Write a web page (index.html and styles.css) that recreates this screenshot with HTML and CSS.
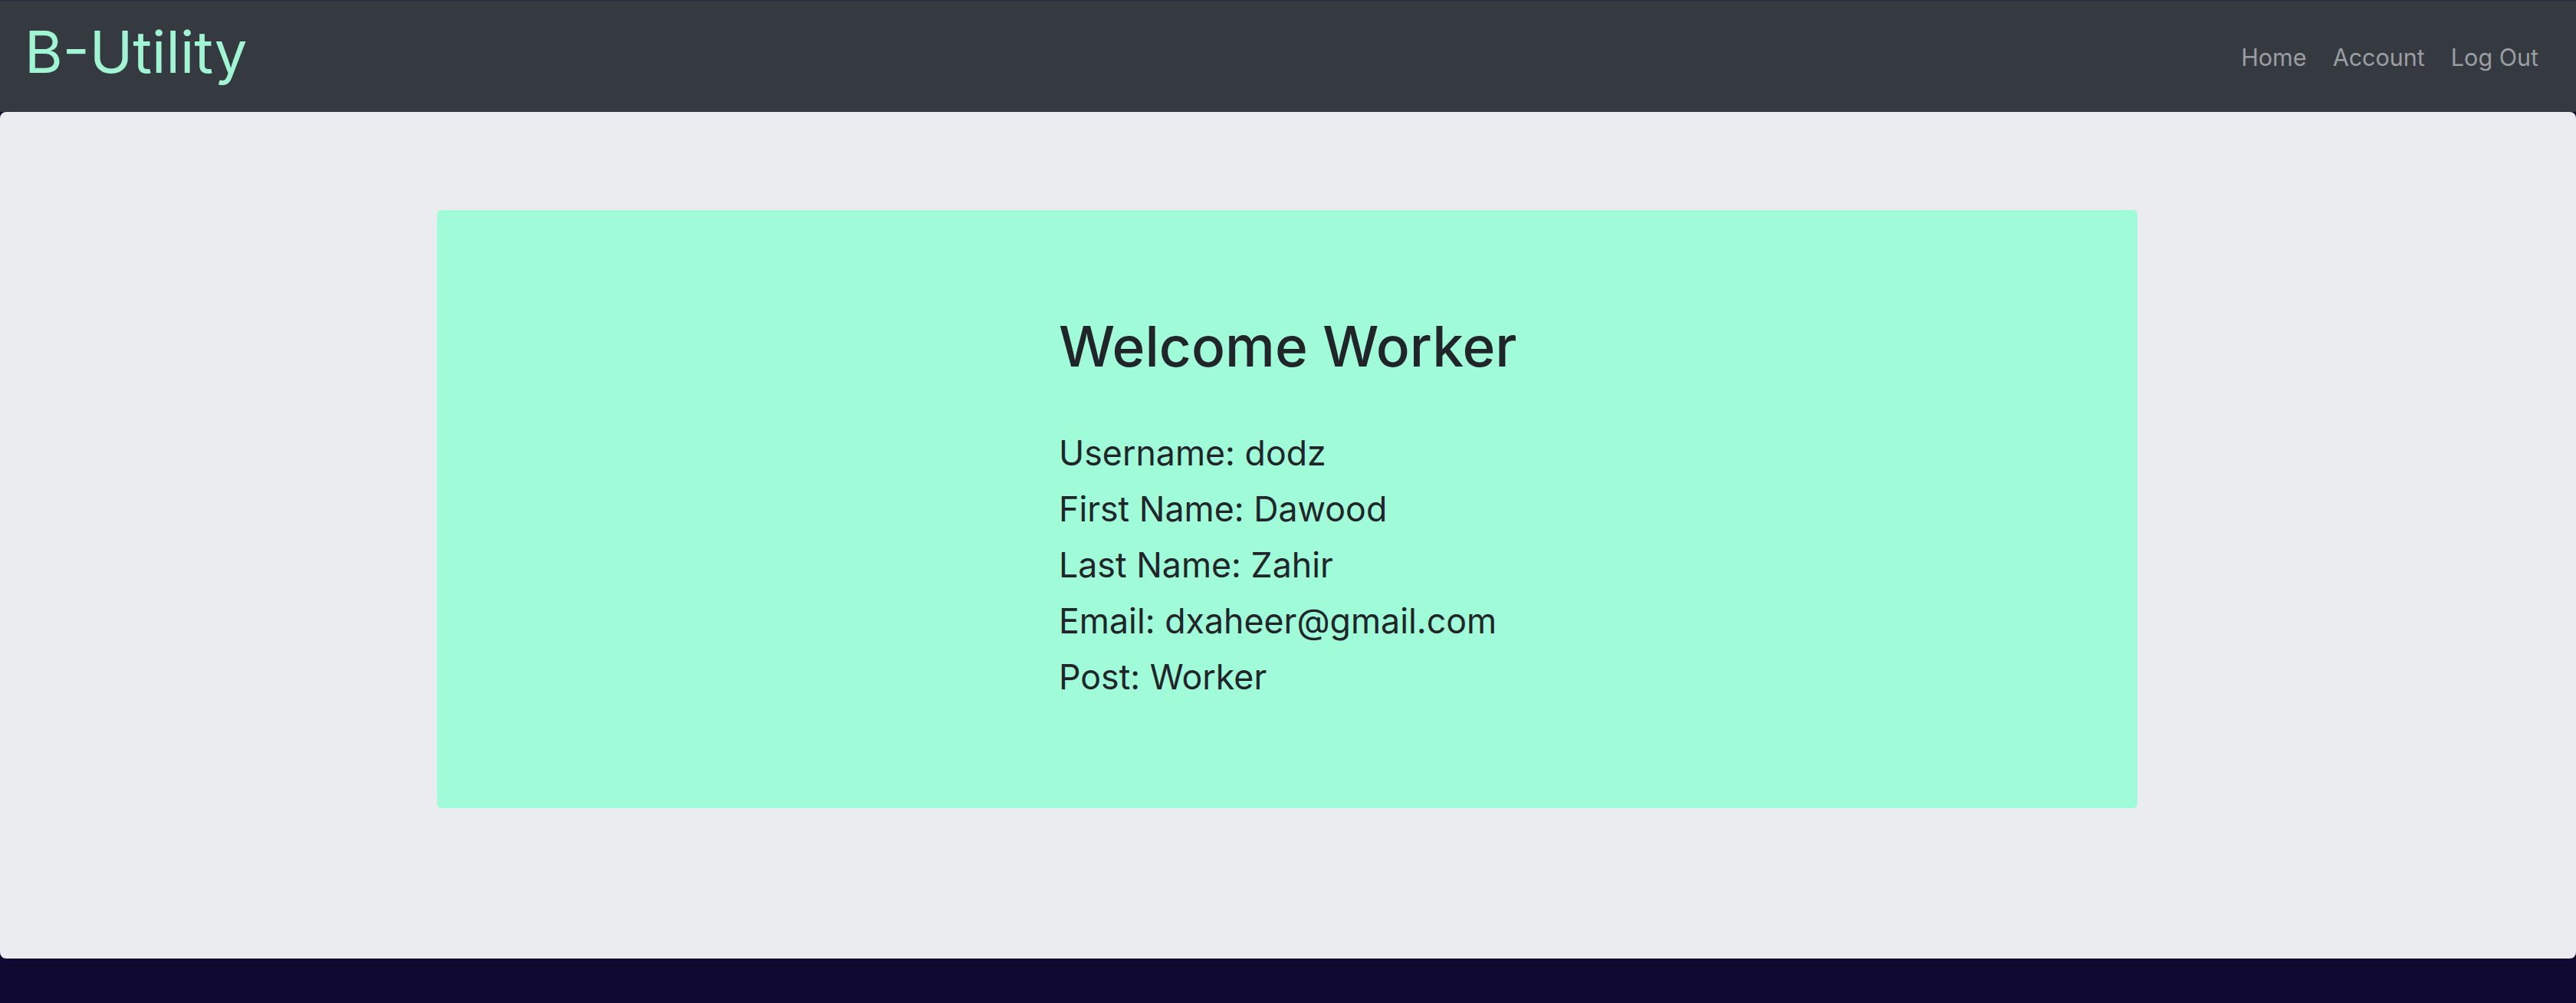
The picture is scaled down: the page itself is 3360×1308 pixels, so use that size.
FILE: index.html
```html
<!DOCTYPE html>
<html lang="en">
<head>
<meta charset="utf-8">
<title>B-Utility</title>
<link rel="stylesheet" href="styles.css">
</head>
<body>
<nav class="navbar">
  <a class="brand" href="#">B-Utility</a>
  <ul class="nav-links">
    <li><a href="#">Home</a></li>
    <li><a href="#">Account</a></li>
    <li><a href="#">Log Out</a></li>
  </ul>
</nav>
<main class="main">
  <section class="card">
    <div class="card-inner">
      <h1 class="title">Welcome Worker</h1>
      <p class="line">Username: dodz</p>
      <p class="line">First Name: Dawood</p>
      <p class="line">Last Name: Zahir</p>
      <p class="line">Email: dxaheer@gmail.com</p>
      <p class="line">Post: Worker</p>
    </div>
  </section>
</main>
</body>
</html>
```

FILE: styles.css
```css
html, body {
  margin: 0;
  padding: 0;
}
body {
  background: #0f0830;
  font-family: Inter, "Noto Sans", "Liberation Sans", sans-serif;
  color: #212529;
  min-height: 1308px;
}
.navbar {
  height: 146px;
  box-sizing: border-box;
  background: #343a40;
  border-top: 2px solid #2a2d3c;
  display: flex;
  align-items: center;
  justify-content: space-between;
  padding: 0 49px 0 32px;
}
.brand {
  color: #a0f5d3;
  font-size: 76px;
  line-height: 1;
  text-decoration: none;
  margin-top: -14px;
}
.nav-links {
  list-style: none;
  display: flex;
  gap: 34px;
  margin: 0;
  padding: 0;
}
.nav-links a {
  color: #9a9ea2;
  font-size: 30.5px;
  text-decoration: none;
}
.main {
  background: #ebecf0;
  border-radius: 8px;
  height: 1104px;
  box-sizing: border-box;
  padding-top: 128px;
}
.card {
  margin-left: 570px;
  width: 2218px;
  background: #a0fbd8;
  border-radius: 6px;
  box-sizing: border-box;
  padding: 134px 0 134px 811px;
}
.card-inner {
  white-space: nowrap;
}
.title {
  font-size: 73px;
  font-weight: 500;
  line-height: 1.2;
  margin: 0 0 59px;
}
.line {
  font-size: 44.7px;
  line-height: 73px;
  margin: 0;
}
```
